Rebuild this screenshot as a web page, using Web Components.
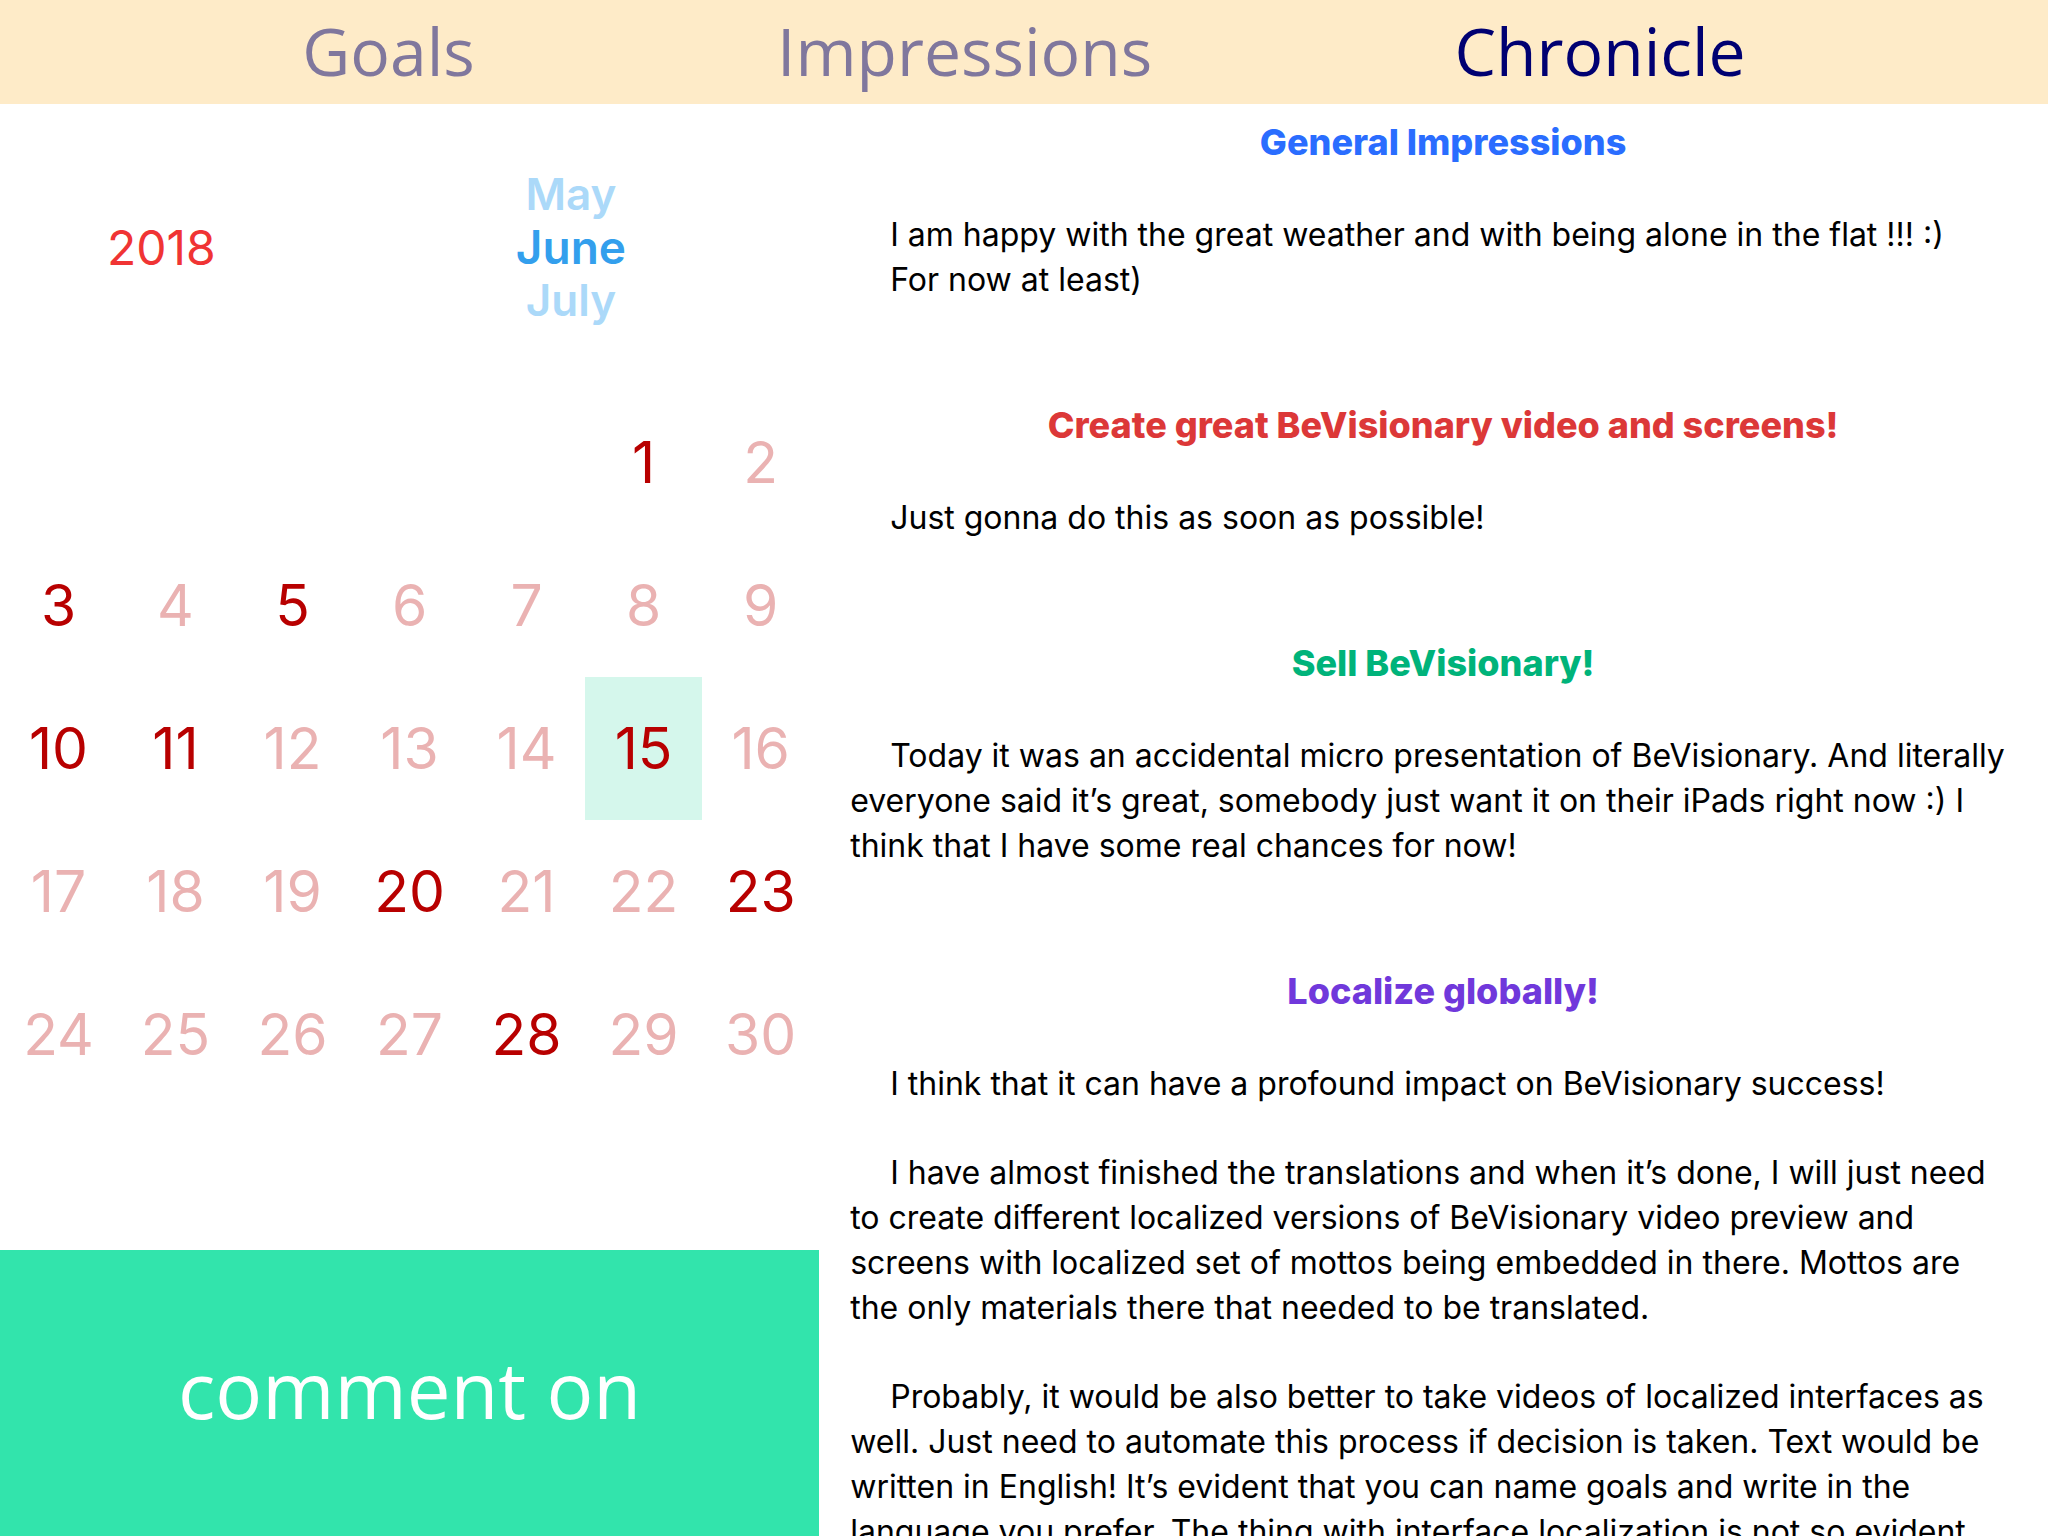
<!DOCTYPE html>
<html lang="en">
<head>
<meta charset="utf-8">
<title>BeVisionary – Chronicle</title>
<style>
  html, body { margin: 0; height: 100%; background: #fff; }
  body { font-family: Inter, "Liberation Sans", sans-serif; color: #000; }
</style>
</head>
<body>
<chronicle-app>
  <nav-tabs slot="header">
    <nav-tab href="#goals">Goals</nav-tab>
    <nav-tab href="#impressions">Impressions</nav-tab>
    <nav-tab href="#chronicle" current>Chronicle</nav-tab>
  </nav-tabs>
  <date-picker slot="side" year="2018" months="May,June,July"></date-picker>
  <month-calendar slot="side" first-column="5" days="30" noted="1,3,5,10,11,15,20,23,28" selected="15"></month-calendar>
  <comment-button slot="action">comment on</comment-button>

  <journal-entry heading="General Impressions" style="--accent:#2a6dff">
    <p>I am happy with the great weather and with being alone in the flat !!! :)</p>
    <p class="joined">For now at least)</p>
  </journal-entry>
  <journal-entry heading="Create great BeVisionary video and screens!" style="--accent:#dc3838">
    <p>Just gonna do this as soon as possible!</p>
  </journal-entry>
  <journal-entry heading="Sell BeVisionary!" style="--accent:#00b37a">
    <p>Today it was an accidental micro presentation of BeVisionary. And literally everyone said it’s great, somebody just want it on their iPads right now :) I think that I have some real chances for now!</p>
  </journal-entry>
  <journal-entry heading="Localize globally!" style="--accent:#7038db">
    <p>I think that it can have a profound impact on BeVisionary success!</p>
    <p>I have almost finished the translations and when it’s done, I will just need to create different localized versions of BeVisionary video preview and screens with localized set of mottos being embedded in there. Mottos are the only materials there that needed to be translated.</p>
    <p>Probably, it would be also better to take videos of localized interfaces as well. Just need to automate this process if decision is taken. Text would be written in English! It’s evident that you can name goals and write in the language you prefer. The thing with interface localization is not so evident</p>
  </journal-entry>
</chronicle-app>

<script>
const define = (name, html, setup) => {
  const template = document.createElement('template');
  template.innerHTML = html;
  customElements.define(name, class extends HTMLElement {
    constructor() {
      super();
      this.attachShadow({ mode: 'open' }).append(template.content.cloneNode(true));
    }
    connectedCallback() {
      if (setup && !this.ready) { this.ready = true; setup(this, this.shadowRoot); }
    }
  });
};

define('chronicle-app', `
  <style>
    :host { display: flex; flex-direction: column; height: 100vh; overflow: hidden; }
    .body { flex: 1; min-height: 0; display: grid; grid-template-columns: 2fr 3fr; }
    aside { display: flex; flex-direction: column; justify-content: space-between; min-height: 0; }
    main { padding: 16px 12px 0 31px; overflow: hidden; display: flex; flex-direction: column; gap: 101px; }
    ::slotted(journal-entry) { flex: none; }
  </style>
  <slot name="header"></slot>
  <div class="body">
    <aside><div><slot name="side"></slot></div><slot name="action"></slot></aside>
    <main><slot></slot></main>
  </div>`);

define('nav-tabs', `
  <style>
    :host { display: block; background: #feebc8; }
    nav { display: flex; justify-content: space-evenly; padding-bottom: 4px; }
  </style>
  <nav><slot></slot></nav>`);

define('nav-tab', `
  <style>
    :host { display: block; }
    a { display: block; font: 450 66px/100px "Open Sans", "Noto Sans", sans-serif; color: #80779d; text-decoration: none; }
    :host([current]) a { color: #000072; }
  </style>
  <a><slot></slot></a>`, (host, root) => {
  const a = root.querySelector('a');
  a.href = host.getAttribute('href');
  if (host.hasAttribute('current')) a.setAttribute('aria-current', 'page');
});

define('date-picker', `
  <style>
    :host { display: grid; grid-template-columns: 13fr 20fr; align-items: center; padding: 64px 0; }
    button { border: 0; padding: 0; background: none; font: 600 44px/53px Inter, sans-serif; color: #abd9f9; }
    .year { font-weight: 400; font-size: 48px; color: #f03434; }
    .months { display: flex; flex-direction: column; align-items: center; }
    .current { font-size: 46px; color: #339fed; }
  </style>
  <button class="year"></button>
  <div class="months"></div>`, (host, root) => {
  root.querySelector('.year').textContent = host.getAttribute('year');
  host.getAttribute('months').split(',').forEach((name, i) => {
    const b = document.createElement('button');
    b.textContent = name;
    if (i === 1) b.className = 'current';
    root.querySelector('.months').append(b);
  });
});

define('month-calendar', `
  <style>
    :host { display: block; }
    table { width: 100%; table-layout: fixed; border-collapse: collapse; }
    td { padding: 0; height: 143px; }
    button { display: block; width: 100%; height: 143px; border: 0; padding: 0; background: none;
      font: 400 57px/143px Inter, sans-serif; color: #eab2b2; }
    .noted { color: #b80000; }
    .selected { background: #d5f7ec; }
  </style>
  <table aria-label="June 2018"><tbody></tbody></table>`, (host, root) => {
  const start = +host.getAttribute('first-column');
  const days = +host.getAttribute('days');
  const noted = host.getAttribute('noted').split(',').map(Number);
  const selected = +host.getAttribute('selected');
  const body = root.querySelector('tbody');
  for (let cell = 0; cell < start + days; cell++) {
    if (cell % 7 === 0) body.insertRow();
    const td = body.rows[body.rows.length - 1].insertCell();
    const day = cell - start + 1;
    if (day < 1) continue;
    const b = document.createElement('button');
    b.textContent = day;
    b.classList.toggle('noted', noted.includes(day));
    b.classList.toggle('selected', day === selected);
    td.append(b);
  }
});

define('comment-button', `
  <style>
    :host { display: block; }
    button { display: block; width: 100%; border: 0; padding: 84px 0 92px; background: #32e4ac; color: #fff;
      font: 450 78px/110px "Open Sans", "Noto Sans", sans-serif; }
  </style>
  <button><slot></slot></button>`);

define('journal-entry', `
  <style>
    :host { display: block; }
    h2 { margin: 0 0 47px; font-size: 36px; line-height: 45px; font-weight: 800; text-align: center; color: var(--accent); }
    .text { padding-right: 24px; display: flex; flex-direction: column; }
    ::slotted(p) { margin: 0; font-size: 32px; line-height: 45px; text-indent: 40px; }
    ::slotted(p:not(:first-child):not(.joined)) { margin-top: 44px; }
  </style>
  <h2></h2>
  <div class="text"><slot></slot></div>`, (host, root) => {
  root.querySelector('h2').textContent = host.getAttribute('heading');
});
</script>
</body>
</html>
